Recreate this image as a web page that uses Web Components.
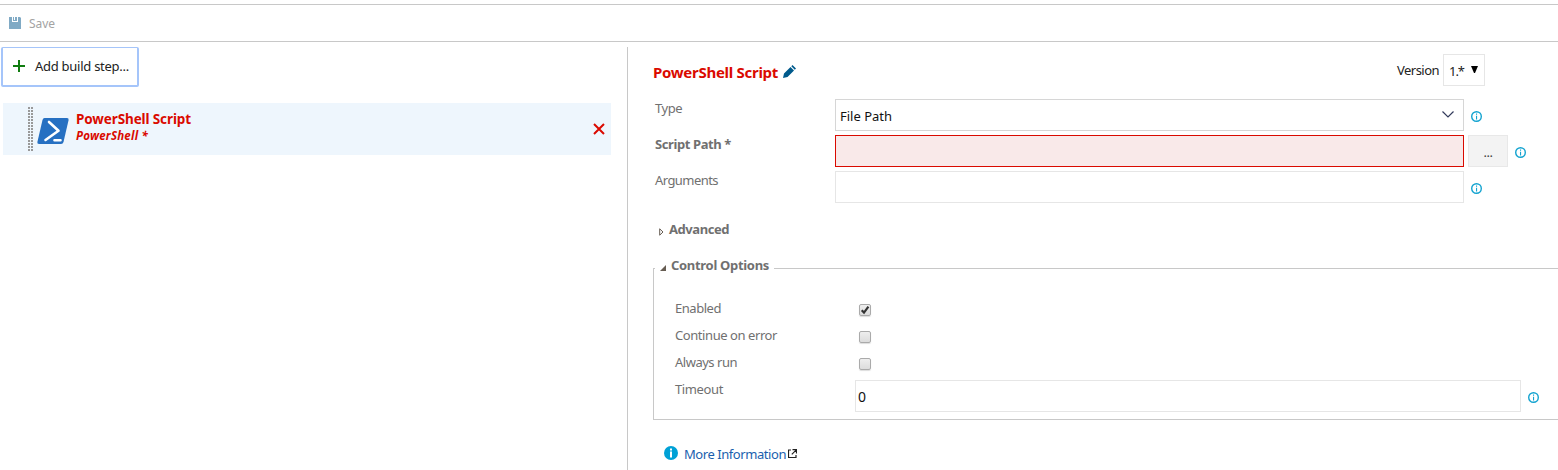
<!DOCTYPE html>
<html lang="en"><head><meta charset="utf-8"><title>Build definition</title>
<style>
html,body{margin:0;height:470px;overflow:hidden;background:#fff;font-family:"Noto Sans","Open Sans",sans-serif;font-size:13px;color:#222}
</style></head><body>
<build-editor></build-editor>
<script>
const define=(name,html,init)=>{
  const t=document.createElement('template');t.innerHTML=html;
  customElements.define(name,class extends HTMLElement{
    constructor(){super();this.attachShadow({mode:'open'}).append(t.content.cloneNode(true));}
    connectedCallback(){if(init)init(this,this.shadowRoot);}
  });
};
// Label whose tracking is adjusted so the text spans the requested width.
define('fit-text',`<style>:host{display:block;white-space:nowrap;line-height:18px;flex:none}span{display:inline-block}</style><span><slot></slot></span>`,
(h,r)=>{const s=r.querySelector('span'),w=+h.getAttribute('w');
  if(w)s.style.letterSpacing=((w-s.getBoundingClientRect().width)/h.textContent.length)+'px';});
define('info-icon',`<style>:host{display:block;flex:none;width:11px;height:11px}svg{display:block}</style>
<svg width="11" height="11" viewBox="0 0 11 11"><circle cx="5.5" cy="5.5" r="4.8" fill="none" stroke="#13a3d0" stroke-width="1.4"/><path d="M5 2.6h1.1v1.2H5zM5 4.8h1.1v3.6H5z" fill="#13a3d0"/></svg>`);
define('text-box',`<style>:host{display:flex;align-items:center;box-sizing:border-box;height:32px;border:1px solid #e6e6e6;background:#fff;flex:none;padding:2px 9px 0 4px;justify-content:space-between;color:#111}
:host([invalid]){border-color:#da0a00;background:#f9e9e9}:host([select]){border-color:#d6d6d6}svg{display:none;margin-top:-4px}:host([select]) svg{display:block}</style>
<slot></slot><svg width="12" height="7" viewBox="0 0 12 7"><path d="M.5.5 6 6l5.500-5.500" fill="none" stroke="#333b5c" stroke-width="1.2"/></svg>`);
define('form-row',`<style>:host{display:flex;height:36px;align-items:flex-start;color:#707070}.l{width:180px;flex:none;padding-top:var(--label-top,0px)}.f{display:flex;align-items:center;flex:none}</style><div class="l"><slot name="label"></slot></div><div class="f"><slot></slot></div>`);
define('check-box',`<style>:host{display:block;box-sizing:border-box;width:12px;height:12px;border:1px solid #aaa;border-radius:2px;background:linear-gradient(#eee,#dcdcdc);box-shadow:0 1px 1px #ddd;margin:5px 0 0 4px}svg{display:none}:host([checked]) svg{display:block}</style>
<svg width="10" height="10" viewBox="0 0 10 10"><path d="M1.700 5.300 4 7.600 8.400 1.700" fill="none" stroke="#333" stroke-width="2.2"/></svg>`);
define('tool-bar',`<style>:host{display:flex;box-sizing:border-box;height:38px;margin-top:4px;border-top:1px solid #c8c8c8;border-bottom:1px solid #c8c8c8;align-items:center;padding:0 0 0 9px;color:#a3a3a3;font-size:12px}svg{margin:-1px 8px 0 0}fit-text{margin-top:1px}</style>
<svg width="12" height="12" viewBox="0 0 12 12"><path fill="#80aac5" d="M0 0h3v5h6V0h2l1 1v11H0zM4 0h1v3h1V0h2v4H4z"/></svg><fit-text w="26">Save</fit-text>`);
define('step-item',`<style>:host{display:flex;box-sizing:border-box;width:608px;height:52px;margin:16px 0 0 3px;background:#eef6fd;color:#da0a00;padding-left:25px}
.grip{width:5px;height:44px;margin:4px 4px 0 0;background:repeating-linear-gradient(#0000 0 2px,#eef6fd 2px 3px),linear-gradient(90deg,#999 0 2px,#eef6fd 2px 3px,#999 3px 5px)}
.ps{margin:15px 7px 0 0}.t{margin-top:7px}.x{margin:20px 6px 0 auto}fit-text{font-weight:700;font-size:13.500px}.sub{font-style:italic;font-size:11.500px;line-height:15px}</style>
<div class="grip"></div><svg class="ps" width="32" height="26" viewBox="0 0 32 26"><path d="M7.500 0H30q2 0 1.600 2L26.500 24q-.5 2-2.500 2H2q-2 0-1.600-2L5.500 2Q6 0 7.500 0z" fill="#2670c2"/><path d="M12 4 21.500 12.800 8.500 22M17.500 22.200h6" fill="none" stroke="#fff" stroke-width="2.600" stroke-linecap="round" stroke-linejoin="round"/></svg>
<div class="t"><fit-text w="115">PowerShell Script</fit-text><fit-text class="sub" w="72">PowerShell *</fit-text></div>
<svg class="x" width="12" height="12" viewBox="0 0 12 12"><path d="m1 1 10 10M11 1 1 11" stroke="#da0a00" stroke-width="2"/></svg>`);
define('step-list',`<style>:host{display:block;width:627px;flex:none;border-right:1px solid #c8c8c8}
.add{display:flex;box-sizing:border-box;align-items:center;width:138px;height:40px;margin-left:1px;border:2px solid #a5c5fa;border-top-width:1px;border-radius:2px;padding:0 0 1px 10px}.add svg{margin:-1px 10px 0 0}</style>
<div class="add"><svg width="12" height="12" viewBox="0 0 12 12"><path d="M6 0v12M0 6h12" stroke="#107c10" stroke-width="2"/></svg><fit-text w="94">Add build step...</fit-text></div><step-item></step-item>`);
define('control-options',`<style>:host{display:block;box-sizing:border-box;margin-left:-2px;width:920px;height:152px;border:1px solid #c8c8c8;border-right:0;padding-left:21px}
.legend{display:flex;align-items:center;width:114px;height:20px;margin:-14px 0 0 -20px;background:#fff;padding-left:5px;color:#707070;font-weight:700;font-size:13px}.legend svg{margin:6px 5px 0 0}
form-row{height:27px}.rows{padding-top:24px}info-icon{margin:2px 0 0 7px}</style>
<div class="legend"><svg width="6" height="6" viewBox="0 0 6 6"><path d="M6 0v6H0z" fill="#665c52"/></svg><fit-text w="98">Control Options</fit-text></div>
<div class="rows"><form-row><fit-text slot="label" w="46">Enabled</fit-text><check-box checked></check-box></form-row>
<form-row><fit-text slot="label" w="102">Continue on error</fit-text><check-box></check-box></form-row>
<form-row><fit-text slot="label" w="62">Always run</fit-text><check-box></check-box></form-row>
<form-row><fit-text slot="label" w="48">Timeout</fit-text><text-box style="width:666px;padding-left:2px;font-size:14px"><fit-text w="8">0</fit-text></text-box><info-icon></info-icon></form-row></div>`);
define('step-details',`<style>:host{display:block;flex:1;min-width:0;padding-left:27px}
header{display:flex;height:52px;margin-left:-2px;align-items:flex-start}.title{font-size:15px;font-weight:700;color:#da0a00;margin-top:16px}.pen{margin:18px 0 0 5px}.v{margin:14px 4px 0 601px}
.ver{display:flex;box-sizing:border-box;width:42px;height:32px;margin-top:7px;border:1px solid #e6e6e6;padding:2px 0 0 5px;align-items:center}.ver svg{margin:-4px 0 0 7px}
.dots{display:flex;align-items:center;justify-content:center;width:40px;height:32px;box-sizing:border-box;border:1px solid #e8e8e8;background:#f3f3f3;margin-left:4px;color:#444;padding-top:2px}
info-icon{margin:3px 0 0 7px}.b{font-weight:700;font-size:13px}.adv{display:flex;align-items:center;height:18px;margin:13px 0 30px 4px;color:#707070}.adv svg{margin:6px 5px 0 0}
.more{display:flex;align-items:center;color:#1a5fae;margin:25px 0 0 9px}.more .i{margin:-3px 6px 0 0}.more .o{margin:-1px 0 0 2px}</style>
<header><fit-text class="title" w="125">PowerShell Script</fit-text><svg class="pen" width="13" height="13" viewBox="0 0 13 13"><path d="M0 13 1 8.500 7.500 2 11 5.500 4.500 12zM8.300 1.200 9.500 0 13 3.500l-1.200 1.200z" fill="#005a8c"/></svg>
<fit-text class="v" w="42">Version</fit-text><div class="ver"><fit-text w="15">1.*</fit-text><svg width="7" height="7" viewBox="0 0 7 7"><path d="M0 0h7L4 7H3z" fill="#000"/></svg></div></header>
<form-row><fit-text slot="label" w="27">Type</fit-text><text-box select style="width:629px"><fit-text w="52">File Path</fit-text></text-box><info-icon></info-icon></form-row>
<form-row><fit-text slot="label" class="b" w="76">Script Path *</fit-text><text-box invalid style="width:629px"></text-box><div class="dots"><fit-text w="9">...</fit-text></div><info-icon></info-icon></form-row>
<form-row><fit-text slot="label" w="63">Arguments</fit-text><text-box style="width:629px"></text-box><info-icon></info-icon></form-row>
<div class="adv"><svg width="5" height="8" viewBox="0 0 5 8"><path d="M.7.8v6.400L4 4z" fill="#fff" stroke="#665c52"/></svg><fit-text class="b" w="60">Advanced</fit-text></div>
<control-options></control-options>
<div class="more"><svg class="i" width="14" height="14" viewBox="0 0 14 14"><circle cx="7" cy="7" r="7" fill="#00a1d6"/><path d="M6 2.500h2v2H6zM6 5.500h2v6H6z" fill="#fff"/></svg><fit-text w="102">More Information</fit-text>
<svg class="o" width="9" height="9" viewBox="0 0 9 9"><path d="M3 1H.5v7.500H8V6M4.500 .6h4V4.500M8.300.8 3.800 5.300" fill="none" stroke="#222" stroke-width="1.200"/></svg></div>`);
define('build-editor',`<style>:host{display:flow-root;height:470px;overflow:hidden}main{display:flex;height:423px;margin-top:5px}</style><tool-bar></tool-bar><main><step-list></step-list><step-details></step-details></main>`);
</script></body></html>
